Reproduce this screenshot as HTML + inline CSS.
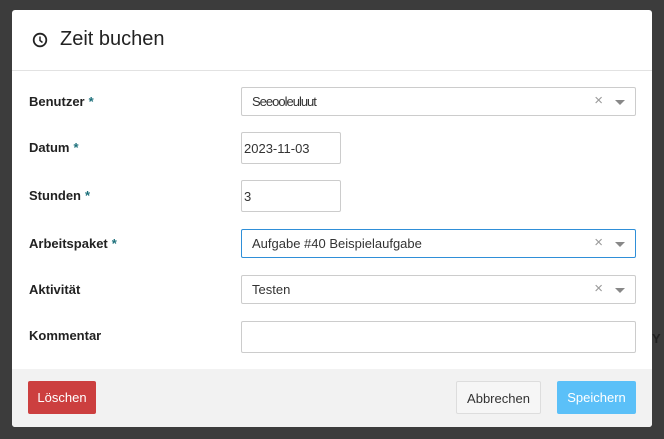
<!DOCTYPE html>
<html><head><style>
body{margin:0;width:664px;height:439px;background:#3c3c3c;font-family:"Liberation Sans",sans-serif;position:relative;overflow:hidden}
.bgtxt{position:absolute;color:#222;font-size:13px}
.m{position:absolute;left:12px;top:10px;width:640px;height:417px;background:#fff;border-radius:3px;overflow:hidden}
.h{position:absolute;left:0;top:0;width:640px;height:60px;border-bottom:1px solid #e2e2e2}
.h span{position:absolute;left:48px;top:18px;font-size:20px;color:#222}
.lbl{position:absolute;left:17px;font-size:13px;font-weight:bold;color:#222}
.lbl b{color:#1b6f7a;margin-left:4px}
.in{position:absolute;left:229px;width:393px;height:27px;border:1px solid #ccc;border-radius:2px;font-size:13px;color:#333;box-sizing:content-box}
.in .t{position:absolute;left:10px;top:6px}
.x{position:absolute;right:32px;top:4px;color:#999;font-size:15px}
.ar{position:absolute;right:10px;top:12px;border-left:5px solid transparent;border-right:5px solid transparent;border-top:5px solid #888}
.f{position:absolute;left:0;top:359px;width:640px;height:58px;background:#f2f2f2}
.btn{position:absolute;top:12px;height:33px;line-height:33px;font-size:13px;text-align:center;border-radius:2px;box-sizing:border-box}
</style></head><body>
<div class="bgtxt" style="left:652px;top:331px;font-weight:bold">Y</div>
<div class="m">
<div class="h">
<svg style="position:absolute;left:20px;top:22px" width="16" height="16" viewBox="0 0 16 16"><circle cx="8" cy="8" r="6.3" fill="none" stroke="#222" stroke-width="1.8"/><path d="M8 4.5V8.5L10.5 10.5" fill="none" stroke="#222" stroke-width="1.5"/></svg>
<span>Zeit buchen</span></div>
<div class="lbl" style="top:84px">Benutzer<b>*</b></div>
<div class="in" style="top:77px"><span class="t" style="letter-spacing:-1px">Seeooleuluut</span><span class="x">×</span><span class="ar"></span></div>
<div class="lbl" style="top:130px">Datum<b>*</b></div>
<div class="in" style="top:122px;width:98px;height:30px"><span class="t" style="left:2px;top:8px">2023-11-03</span></div>
<div class="lbl" style="top:178px">Stunden<b>*</b></div>
<div class="in" style="top:170px;width:98px;height:30px"><span class="t" style="left:2px;top:8px">3</span></div>
<div class="lbl" style="top:226px">Arbeitspaket<b>*</b></div>
<div class="in" style="top:219px;border:1px solid #2f8fd8"><span class="t">Aufgabe #40 Beispielaufgabe</span><span class="x">×</span><span class="ar"></span></div>
<div class="lbl" style="top:272px">Aktivität</div>
<div class="in" style="top:265px"><span class="t">Testen</span><span class="x">×</span><span class="ar"></span></div>
<div class="lbl" style="top:318px">Kommentar</div>
<div class="in" style="top:311px;height:30px"></div>
<div class="f">
<div class="btn" style="left:16px;width:68px;background:#cc3f3f;color:#fff">Löschen</div>
<div class="btn" style="left:444px;width:85px;background:#f6f6f6;border:1px solid #ddd;color:#333">Abbrechen</div>
<div class="btn" style="left:545px;width:79px;background:#5bc0f8;color:#fff">Speichern</div>
</div>
</div>
</body></html>
